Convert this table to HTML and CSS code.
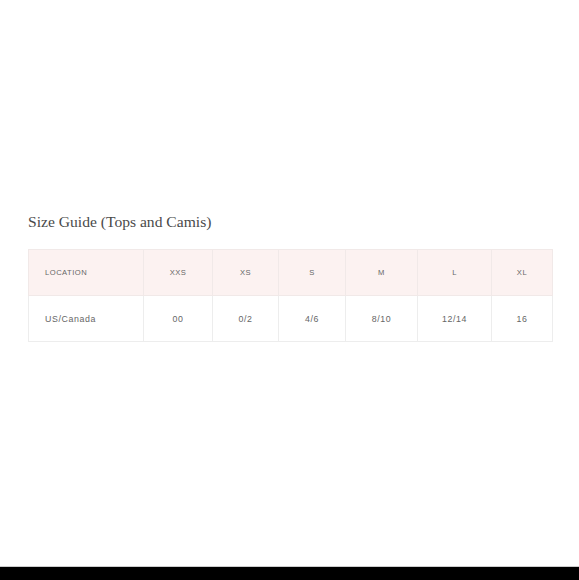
FILE: index.html
```html
<!DOCTYPE html>
<html>
<head>
<meta charset="utf-8">
<link rel="stylesheet" href="styles.css">
</head>
<body>
<div class="page">
  <main class="content">
    <h2 class="title">Size Guide (Tops and Camis)</h2>
    <table class="size-table">
      <colgroup>
        <col class="c-loc"><col class="c-xxs"><col class="c-xs"><col class="c-s"><col class="c-m"><col class="c-l"><col class="c-xl">
      </colgroup>
      <thead>
        <tr><th class="first">LOCATION</th><th>XXS</th><th>XS</th><th>S</th><th>M</th><th>L</th><th>XL</th></tr>
      </thead>
      <tbody>
        <tr><td class="first">US/Canada</td><td>00</td><td>0/2</td><td>4/6</td><td>8/10</td><td>12/14</td><td>16</td></tr>
      </tbody>
    </table>
  </main>
  <div class="bottom-bar"></div>
</div>
</body>
</html>
```
FILE: styles.css
```css
html, body {
  margin: 0;
  padding: 0;
  background: #fff;
}
.page {
  display: flex;
  flex-direction: column;
  height: 580px;
}
.content {
  flex: 1;
  padding: 212px 27px 0 28px;
}
.title {
  margin: 0 0 17px 0;
  font-family: "Liberation Serif", "DejaVu Serif", serif;
  font-weight: normal;
  font-size: 15.6px;
  line-height: 20px;
  color: #4a4a4a;
}
.size-table {
  border-collapse: collapse;
  width: 524px;
  table-layout: fixed;
  font-family: "Liberation Sans", Arial, sans-serif;
  color: #666;
}
.c-loc { width: 115px; }
.c-xxs { width: 69px; }
.c-xs { width: 66px; }
.c-s { width: 67px; }
.c-m { width: 72px; }
.c-l { width: 74px; }
.c-xl { width: 61px; }
.size-table th,
.size-table td {
  border: 1px solid #ededed;
  height: 45px;
  padding: 0;
  text-align: center;
  font-weight: normal;
}
.size-table thead th {
  background: #fcf2f1;
  border-color: #f1e9e8;
  font-size: 7.6px;
  letter-spacing: 0.5px;
}
.size-table tbody td {
  font-size: 8.8px;
  letter-spacing: 0.6px;
}
.size-table .first {
  text-align: left;
  padding-left: 16px;
}
.bottom-bar {
  height: 13px;
  background: #000;
  border-top: 1px solid #ccc;
}
```
